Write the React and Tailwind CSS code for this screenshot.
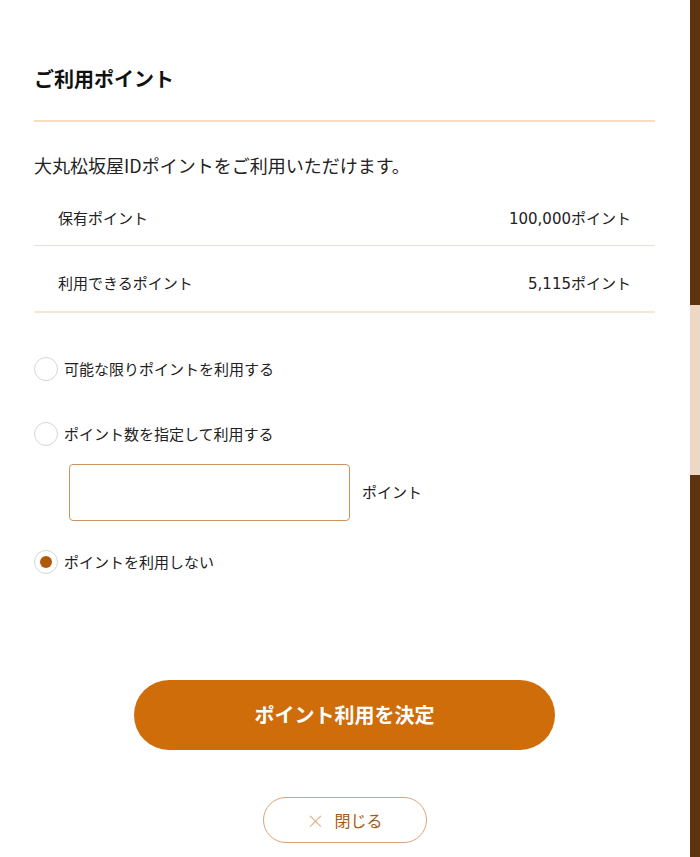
import React, { useState } from "react";

const font = { fontFamily: '"Noto Sans CJK JP", "Noto Sans", sans-serif' };
const numFont = { fontFamily: '"DejaVu Sans", "Noto Sans CJK JP", sans-serif' };

const Radio = ({ checked, label, onClick }) => (
  <button type="button" onClick={onClick} className="flex items-center gap-[6px] text-[15px] leading-[24px] text-[#222]">
    <span className="flex h-6 w-6 items-center justify-center rounded-full border border-[#d6d6d6] bg-white">
      {checked && <span className="h-3 w-3 rounded-full bg-[#b0590a]" />}
    </span>
    <span>{label}</span>
  </button>
);

const App = () => {
  const [mode, setMode] = useState("none");

  return (
    <div className="flex h-[857px] w-[700px] overflow-hidden bg-white" style={font}>
      <div className="flex flex-1 flex-col pl-[34px] pr-[35px]">
        <h2 className="pt-[64px] pb-[26px] text-[20px] font-bold leading-[30px] text-[#111] border-b-2 border-[#f5dcc2]">
          ご利用ポイント
        </h2>

        <p className="mt-[30px] text-[18px] leading-[27px] text-[#222]">
          大丸松坂屋IDポイントをご利用いただけます。
        </p>

        <div className="flex flex-col text-[15px] leading-[22px] text-[#222]">
          <div className="flex justify-between border-b border-[#eadfd3] px-6 pt-[28px] pb-[15px]">
            <span>保有ポイント</span>
            <span style={numFont}>100,000<span style={font}>ポイント</span></span>
          </div>
          <div className="flex justify-between border-b-2 border-[#f6e6d6] px-6 pt-[26px] pb-[16px]">
            <span>利用できるポイント</span>
            <span style={numFont}>5,115<span style={font}>ポイント</span></span>
          </div>
        </div>

        <div className="mt-[44px] flex flex-col">
          <Radio checked={mode === "max"} label="可能な限りポイントを利用する" onClick={() => setMode("max")} />
          <div className="mt-[41px]">
            <Radio checked={mode === "set"} label="ポイント数を指定して利用する" onClick={() => setMode("set")} />
          </div>
          <div className="mt-[18px] ml-[35px] flex items-center gap-3">
            <input className="h-[57px] w-[281px] rounded border border-[#d0925c] px-3 text-[15px] outline-none" />
            <span className="text-[15px] text-[#222]">ポイント</span>
          </div>
          <div className="mt-[29px]">
            <Radio checked={mode === "none"} label="ポイントを利用しない" onClick={() => setMode("none")} />
          </div>
        </div>

        <div className="mt-[106px] flex flex-col items-center">
          <button className="h-[70px] w-[421px] rounded-full bg-[#cf6d0a] text-[20px] font-bold text-white">
            ポイント利用を決定
          </button>
          <button className="mt-[47px] flex h-[46px] w-[164px] items-center justify-center gap-[10px] rounded-full border border-[#d9a47a] text-[16px] text-[#a85a14]">
            <span className="text-[18px] font-light text-[#d9a47a]">×</span>
            <span>閉じる</span>
          </button>
        </div>
      </div>

      <div className="flex w-[10px] flex-col">
        <div className="h-[305px] bg-[#5e3310]" />
        <div className="h-[170px] bg-[#ecd8c4]" />
        <div className="flex-1 bg-[#5e3310]" />
      </div>
    </div>
  );
};

export default App;
